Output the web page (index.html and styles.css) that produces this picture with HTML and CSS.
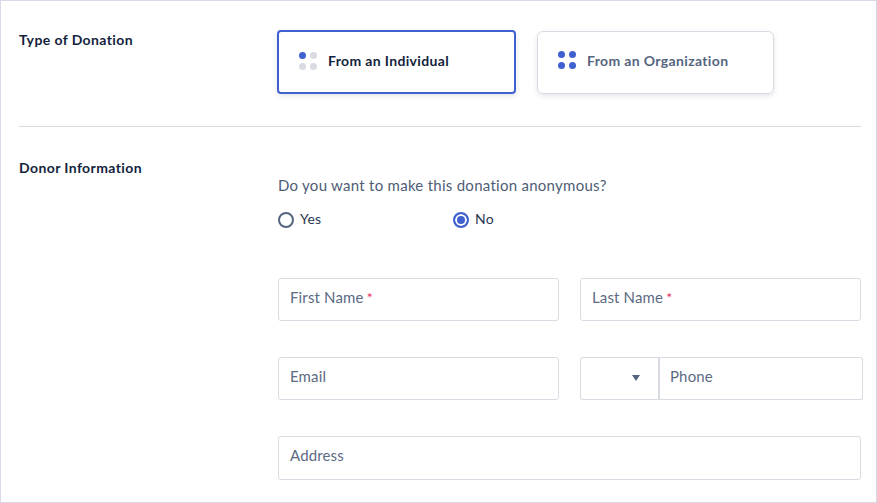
FILE: index.html
```html
<!DOCTYPE html>
<html lang="en">

<head>
    <meta charset="UTF-8">
    <title>Donation</title>
    <link rel="stylesheet" href="styles.css">
</head>

<body>
    <div class="frame">
        <section class="typeRow">
            <h2 class="rowLabel">Type of Donation</h2>
            <div class="cards">
                <a class="card cardOn" href="javascript:;">
                    <span class="dots">
                        <i class="dotOn"></i><i></i><i></i><i></i>
                    </span>
                    From an Individual
                </a>
                <a class="card" href="javascript:;">
                    <span class="dots dotsAll">
                        <i></i><i></i><i></i><i></i>
                    </span>
                    From an Organization
                </a>
            </div>
        </section>
        <section class="donorRow">
            <h2 class="rowLabel">Donor Information</h2>
            <div class="donorBody">
                <p class="question">Do you want to make this donation anonymous?</p>
                <div class="radios">
                    <label class="radio"><span class="ring"></span><span class="radioText">Yes</span></label>
                    <label class="radio"><span class="ring ringOn"></span><span class="radioText">No</span></label>
                </div>
                <div class="fields">
                    <div class="field">First Name<b>*</b></div>
                    <div class="field">Last Name<b>*</b></div>
                    <div class="field">Email</div>
                    <div class="phone">
                        <div class="code"><span class="caret"></span></div>
                        <div class="field phoneNum">Phone</div>
                    </div>
                    <div class="field wide">Address</div>
                </div>
            </div>
        </section>
    </div>
</body>

</html>
```

FILE: styles.css
```css
* {
    margin: 0;
    padding: 0;
    box-sizing: border-box;
}

html,
body {
    height: 100%;
    overflow: hidden;
    background: #fff;
}

body {
    font-family: "Lato", "Liberation Sans", sans-serif;
    color: #14233c;
}

a {
    text-decoration: none;
}

.frame {
    height: 503px;
    padding: 0 15px 0 18px;
    border: 1px solid #d8d9e6;
}

.typeRow,
.donorRow {
    display: grid;
    grid-template-columns: 259px 1fr;
}

.typeRow {
    height: 126px;
    padding-top: 29px;
    border-bottom: 1px solid #d9dbe2;
}

.rowLabel {
    font-size: 14px;
    line-height: 20px;
    font-weight: 700;
    letter-spacing: .4px;
}

.cards {
    display: flex;
    gap: 21px;
}

.card {
    display: flex;
    align-items: center;
    gap: 11px;
    width: 237px;
    height: 63px;
    margin-top: 1px;
    padding: 0 0 5px 20px;
    border: 1px solid #d9dbe2;
    border-radius: 6px;
    box-shadow: 0 2px 5px rgba(30, 40, 70, .12);
    font-size: 14px;
    font-weight: 700;
    letter-spacing: .35px;
    color: #56657f;
}

.cardOn {
    width: 239px;
    height: 64px;
    margin-top: 0;
    margin-left: -1px;
    padding-bottom: 3px;
    border: 2px solid #4060d0;
    border-radius: 4px;
    color: #14233c;
}

.dots {
    display: grid;
    grid-template-columns: 7px 7px;
    gap: 4px;
}

.dots i {
    width: 7px;
    height: 7px;
    border-radius: 50%;
    background: #d9dbe2;
}

.dots .dotOn,
.dotsAll i {
    background: #4060d0;
}

.donorRow {
    padding-top: 31px;
}

.question {
    margin-top: 17px;
    font-size: 15px;
    line-height: 20px;
    letter-spacing: .27px;
    color: #4e5d76;
}

.radios {
    display: flex;
    margin-top: 15px;
}

.radio {
    display: flex;
    align-items: center;
    gap: 6px;
    width: 175px;
    height: 20px;
    font-size: 14px;
    letter-spacing: .2px;
    color: #2a3850;
}

.radioText {
    line-height: 18px;
    margin-bottom: 2px;
}

.ring {
    width: 16px;
    height: 16px;
    border: 2px solid #56657f;
    border-radius: 50%;
}

.ringOn {
    border-color: #4060d0;
    background: #4060d0;
    box-shadow: inset 0 0 0 2px #fff;
}

.fields {
    display: grid;
    grid-template-columns: 281px 281px;
    column-gap: 21px;
    row-gap: 36px;
    margin-top: 48px;
}

.field {
    height: 43px;
    padding-left: 11px;
    border: 1px solid #d9dbe2;
    border-radius: 3px;
    font-size: 15px;
    line-height: 36px;
    letter-spacing: .15px;
    color: #5c6b83;
}

.field b {
    margin-left: 3px;
    font-weight: 400;
    font-size: 14px;
    color: #e8315f;
}

.phone {
    display: flex;
    width: 283px;
}

.code {
    display: flex;
    align-items: center;
    justify-content: flex-end;
    width: 80px;
    height: 43px;
    padding-right: 18px;
    border: 1px solid #d9dbe2;
    border-right-width: 2px;
    border-radius: 3px 0 0 3px;
}

.caret {
    margin-bottom: 2px;
    border-top: 6px solid #56657f;
    border-left: 4px solid transparent;
    border-right: 4px solid transparent;
}

.phoneNum {
    flex: 1;
    border-left: 0;
    border-radius: 0 3px 3px 0;
    padding-left: 10px;
}

.wide {
    grid-column: 1 / 3;
    height: 44px;
}
```
